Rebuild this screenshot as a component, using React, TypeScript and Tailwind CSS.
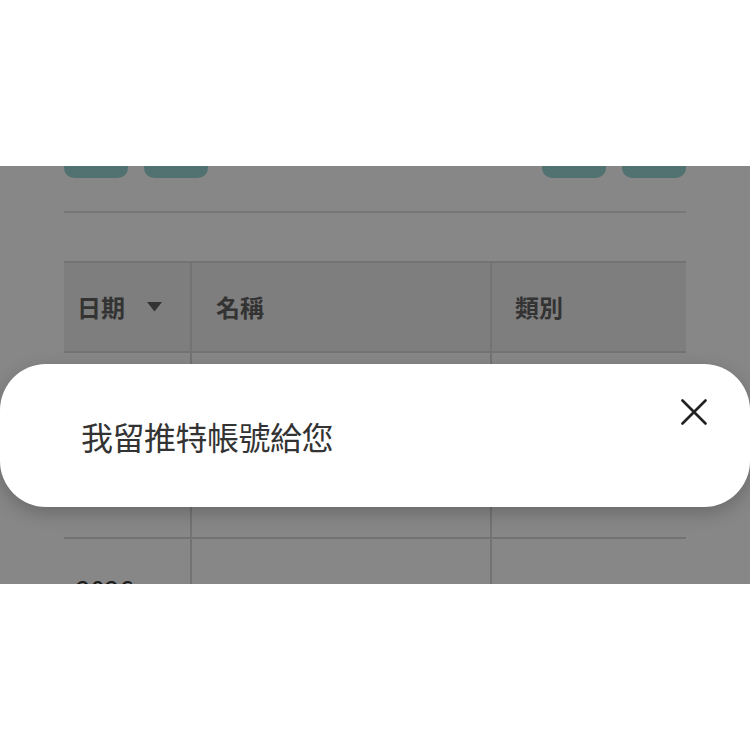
import React from "react";

const cjk = { fontFamily: '"Noto Sans CJK TC", "Noto Sans", sans-serif' };

function SortArrow() {
  return (
    <svg width="15" height="10" viewBox="0 0 15 10" className="ml-[22px]">
      <path d="M0 0 H15 L7.5 9.5 Z" fill="#333333" />
    </svg>
  );
}

function CloseIcon() {
  return (
    <svg width="26" height="26" viewBox="0 0 26 26" fill="none">
      <path d="M1.5 1.5 L24.5 24.5 M24.5 1.5 L1.5 24.5" stroke="#222222" strokeWidth="2.6" strokeLinecap="round" />
    </svg>
  );
}

export default function App() {
  const cell = "border-r-2 border-[#737373]";
  return (
    <div className="w-[750px] h-[750px] bg-white" style={cjk}>
      <div className="h-[166px]" />
      <div className="relative h-[418px] overflow-hidden bg-[#878787]">
        <div className="mx-[64px]">
          {/* action buttons */}
          <div className="flex justify-between -mt-[28px]">
            <div className="flex gap-[16px]">
              <div className="w-[64px] h-[40px] rounded-[10px] bg-[#527272]" />
              <div className="w-[64px] h-[40px] rounded-[10px] bg-[#527272]" />
            </div>
            <div className="flex gap-[16px]">
              <div className="w-[64px] h-[40px] rounded-[10px] bg-[#527272]" />
              <div className="w-[64px] h-[40px] rounded-[10px] bg-[#527272]" />
            </div>
          </div>

          <div className="mt-[33px] h-[2px] bg-[#777777]" />

          {/* table */}
          <div className="mt-[48px] border-t-2 border-[#737373]">
            <div className="grid grid-cols-[128px_300px_194px] h-[90px] bg-[#7e7e7e] border-b-2 border-[#737373] text-[24px] font-bold text-[#333333]">
              <div className={`${cell} flex items-center pl-[13px]`}>
                日期
                <SortArrow />
              </div>
              <div className={`${cell} flex items-center pl-[24px]`}>名稱</div>
              <div className="flex items-center pl-[23px]">類別</div>
            </div>
            <div className="grid grid-cols-[128px_300px_194px] h-[186px] border-b-2 border-[#737373]">
              <div className={cell} />
              <div className={cell} />
              <div />
            </div>
            <div className="grid grid-cols-[128px_300px_194px] h-[120px]">
              <div className={`${cell} pt-[37px] pl-[12px] text-[26px] text-[#1c1c1c] leading-none`}>2026</div>
              <div className={cell} />
              <div />
            </div>
          </div>
        </div>

        {/* toast */}
        <div className="absolute left-0 right-0 top-[198px] h-[143px] rounded-[46px] bg-white shadow-[0_6px_18px_rgba(0,0,0,0.22)] flex items-center justify-between pl-[81px] pr-[43px]">
          <span className="text-[32px] text-[#333333] leading-none tracking-[-0.5px]">我留推特帳號給您</span>
          <div className="self-start mt-[35px]">
            <CloseIcon />
          </div>
        </div>
      </div>
    </div>
  );
}
